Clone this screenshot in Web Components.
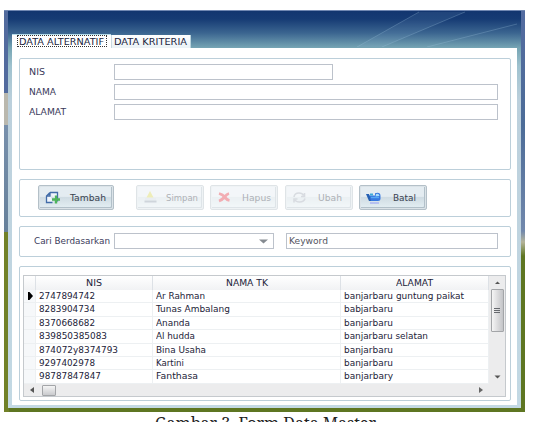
<!DOCTYPE html>
<html lang="id">
<head>
<meta charset="utf-8">
<title>Form Data Master</title>
<style>
    body {
        margin: 0;
        background: #fff;
        overflow: hidden;
        height: 422px;
        font-family: "DejaVu Sans", Verdana, sans-serif;
        font-size: 9px;
        color: #3a3a5a;
    }
</style>
</head>
<body>
<data-master></data-master>
<script>
// one line of text stretched to a given width
class FitText extends HTMLElement {
    constructor() {
        super();
        this.attachShadow({mode: "open"});
    }
    connectedCallback() {
        this.shadowRoot.innerHTML = `<style>
        :host {
            display: block;
            flex: none;
            white-space: nowrap;
            line-height: 12px;
            width: ${this.getAttribute('width')}px;
        }
        span {
            display: inline-block;
            transform-origin: 0 50%;
        }
        </style><span><slot></slot></span>`;
        const span = this.shadowRoot.querySelector('span');
        const real = span.getBoundingClientRect().width;
        if (real > 0) {
            span.style.transform = `scaleX(${this.getAttribute('width') / real})`;
        }
    }
}
customElements.define('fit-text', FitText);

class GroupPanel extends HTMLElement {
    constructor() {
        super();
        this.attachShadow({mode: "open"});
        this.shadowRoot.innerHTML = `<style>
        :host {
            display: block;
            flex: none;
            box-sizing: border-box;
            border: 1px solid #bccfda;
            border-radius: 2px;
            background: #fff;
        }
        </style><slot></slot>`;
    }
}
customElements.define('group-panel', GroupPanel);

class TextField extends HTMLElement {
    constructor() {
        super();
        this.attachShadow({mode: "open"});
    }
    connectedCallback() {
        const combo = this.hasAttribute('combo');
        this.shadowRoot.innerHTML = `<style>
        :host {
            display: flex;
            align-items: center;
            justify-content: ${combo ? 'flex-end' : 'flex-start'};
            flex: none;
            box-sizing: border-box;
            width: ${this.getAttribute('width')}px;
            height: 16px;
            border: 1px solid #bcc2cb;
            background: #fff;
            padding: 0 ${combo ? 5 : 2}px;
            color: #55555f;
        }
        </style><slot></slot>${combo ? '<svg width="9" height="5"><path d="M0 .5h9L4.5 4.5z" fill="#858b91"/></svg>' : ''}`;
    }
}
customElements.define('text-field', TextField);

const icons = {
    add: `<path d="M5 1.5h7.500v9M5 1.500L1.500 5v6.500h6M5 1.500V5H1.500" fill="#f0f6fc" stroke="#426ca8" stroke-width="1.300"/>
          <path d="M11 4.500v8M7 8.500h8" stroke="#4eb45b" stroke-width="2.400"/>`,
    save: `<path d="M7 0l3.500 6.500h-7z" fill="#d8d65a"/><path d="M1.500 9.500h12v2h-12z" fill="#8f9cac"/><path d="M2 8h11" stroke="#c5ccd5"/>`,
    remove: `<path d="M2 2.500q4 1 5.500 3.500Q10 3 12 2.500M2 10Q5 9 7.500 6q2.500 3 5 3.500" fill="none" stroke="#e23d4b" stroke-width="2.800"/>`,
    edit: `<path d="M2 6q.5-4 5-4 3.500 0 4.500 2.500M12.500 2v3.500H9M13 7.500q-1 3.500-5.500 3.500Q4 11 3 9M2 11.500V8h3.500" fill="none" stroke="#a3acb8" stroke-width="1.600"/>`,
    cancel: `<path d="M2 4.500h7V2.200q5.500-1.400 5.500 2.800v3q0 2-2.500 2H4z" fill="#3878df"/><path d="M0 3h3l2 7H3z" fill="#2560b3"/>
          <path d="M4 3.500h3" stroke="#3fa9d8" stroke-width="2"/><path d="M10 3q3-1 3.500 2l-4 .5z" fill="#a7ddfa"/><path d="M5 6.500h8" stroke="#55a8f5" stroke-width="1.400"/><path d="M4 12h9" stroke="#b3bdf2" stroke-width="1.800"/>`
};

class ToolButton extends HTMLElement {
    constructor() {
        super();
        this.attachShadow({mode: "open"});
    }
    connectedCallback() {
        this.shadowRoot.innerHTML = `<style>
        :host {
            display: flex;
            flex: none;
            align-items: center;
            justify-content: space-between;
            box-sizing: border-box;
            width: ${this.getAttribute('width')}px;
            height: 25px;
            padding: 0 ${this.getAttribute('end') || 7}px 0 6px;
            border: 1px solid #b4c0c8;
            border-radius: 2px;
            background: linear-gradient(#e4ecf1 0 45%, #d0dce3 50%, #e5f0f4);
            box-shadow: inset 1px 1px #dbe3e8, inset -1px -1px #dbe3e8, inset -2px -2px #b2c0c9;
            color: #39424f;
        }
        :host([disabled]) {
            opacity: .42;
        }
        svg {
            display: block;
        }
        </style>
        <svg width="16" height="14" viewBox="0 0 16 14">${icons[this.getAttribute('icon')]}</svg>
        <slot></slot>`;
    }
}
customElements.define('tool-button', ToolButton);

class TabBar extends HTMLElement {
    constructor() {
        super();
        this.attachShadow({mode: "open"});
        this.shadowRoot.innerHTML = `<style>
        :host {
            display: flex;
            align-items: flex-end;
            height: 37px;
            color: #20233c;
        }
        .tab {
            box-sizing: border-box;
            height: 13px;
            width: 80px;
            background: linear-gradient(#fff, #eaf2f6);
            border-right: 1px solid #b9d3dc;
            border-left: 1px solid #c9d9e0;
            padding: 1px 0 0 2px;
        }
        .active {
            width: 99px;
            height: 14px;
            background: #fff;
            border: 0;
            border-top: 1px solid #b5dcea;
            padding: 0 0 0 5px;
        }
        .focus {
            box-sizing: border-box;
            width: 90px;
            height: 12px;
            border: 1px dotted #333;
            padding-left: 1px;
        }
        </style>
        <div class="tab active"><div class="focus"><fit-text width="85">DATA ALTERNATIF</fit-text></div></div>
        <div class="tab"><fit-text width="73">DATA KRITERIA</fit-text></div>`;
    }
}
customElements.define('tab-bar', TabBar);

const rows = [
    ['2747894742', 56, 'Ar Rahman', 49, 'banjarbaru guntung paikat', 120],
    ['8283904734', 56, 'Tunas Ambalang', 74, 'babjarbaru', 49],
    ['8370668682', 56, 'Ananda', 34, 'banjarbaru', 49],
    ['839850385083', 68, 'Al hudda', 39, 'banjarbaru selatan', 84],
    ['874072y8374793', 79, 'Bina Usaha', 50, 'banjarbaru', 49],
    ['9297402978', 56, 'Kartini', 28, 'banjarbaru', 49],
    ['98787847847', 62, 'Fanthasa', 42, 'banjarbary', 49]
];

class DataGrid extends HTMLElement {
    constructor() {
        super();
        this.attachShadow({mode: "open"});
    }
    createRow(row, i) {
        return `<div class="row">
        <div class="mark">${i === 0 ? '<svg width="7" height="8"><path d="M1 0h1.500L6 4 2.500 8H1z" fill="#000"/></svg>' : ''}</div>
        <div><fit-text width="${row[1]}">${row[0]}</fit-text></div>
        <div><fit-text width="${row[3]}">${row[2]}</fit-text></div>
        <div><fit-text width="${row[5]}">${row[4]}</fit-text></div>
        </div>`;
    }
    connectedCallback() {
        this.shadowRoot.innerHTML = `<style>
        :host {
            display: grid;
            grid-template: 108px 12px / 465px 16px;
            box-sizing: border-box;
            width: 483px;
            height: 122px;
            border: 1px solid #c5c9cd;
            background: #ececed;
            color: #222238;
        }
        .table {
            background: #fff;
            overflow: hidden;
        }
        .head, .row {
            display: grid;
            grid-template-columns: 12px 117px 188px 148px;
        }
        .head {
            height: 14px;
            background: linear-gradient(#fff, #f1f2f4);
        }
        .head > div {
            display: flex;
            justify-content: center;
            padding-top: 1px;
            border-right: 1px solid #dde1e6;
        }
        .row {
            height: 13.400px;
        }
        .row > div {
            box-sizing: border-box;
            padding-left: 3px;
            border-right: 1px solid #edf0f2;
            border-bottom: 1px solid #edf0f2;
        }
        .row .mark {
            padding: 2px 0 0 3px;
            background: #f6f8fa;
        }
        .vbar {
            display: flex;
            flex-direction: column;
            align-items: center;
        }
        .vbar svg, .hbar svg {
            flex: none;
        }
        .thumb {
            box-sizing: border-box;
            border: 1px solid #a3a5a8;
            border-radius: 1px;
        }
        .vbar .thumb {
            display: grid;
            place-items: center;
            width: 13px;
            height: 43px;
            background: linear-gradient(90deg, #f5f5f5, #dcdcde 50%, #c3c4c7);
        }
        .hbar {
            grid-column: 1 / 3;
            display: flex;
            align-items: center;
            padding-left: 6px;
        }
        .hbar .thumb {
            width: 14px;
            height: 11px;
            margin: 0 auto 0 8px;
            background: linear-gradient(#f5f5f5, #c9cacd);
        }
        .vbar .down {
            margin: auto 0 5px;
        }
        .hbar .right {
            margin-right: 22px;
        }
        </style>
        <div class="table">
            <div class="head">
                <div></div>
                <div><fit-text width="16">NIS</fit-text></div>
                <div><fit-text width="42">NAMA TK</fit-text></div>
                <div><fit-text width="37">ALAMAT</fit-text></div>
            </div>
            ${rows.map(this.createRow).join('')}
        </div>
        <div class="vbar">
            <svg width="7" height="13"><path d="M1 8h5L3.500 5.500z" fill="#555"/></svg>
            <div class="thumb"><svg width="6" height="6"><path d="M0 .5h6M0 2.500h6M0 4.500h6" stroke="#66696e"/></svg></div>
            <svg class="down" width="7" height="4"><path d="M.5 .5h6L3.500 3.500z" fill="#555"/></svg>
        </div>
        <div class="hbar">
            <svg width="4" height="6"><path d="M4 0v6L0 3z" fill="#555"/></svg>
            <div class="thumb"></div>
            <svg class="right" width="4" height="6"><path d="M0 0v6l4-3z" fill="#666"/></svg>
        </div>`;
    }
}
customElements.define('data-grid', DataGrid);

class DataMaster extends HTMLElement {
    constructor() {
        super();
        this.attachShadow({mode: "open"});
    }
    connectedCallback() {
        this.shadowRoot.innerHTML = `<style>
        :host {
            display: block;
            padding: 10px 0 0 4px;
        }
        .frame {
            box-sizing: border-box;
            width: 521px;
            height: 402px;
            padding: 1px 4px 4px;
            background:
                linear-gradient(#7087b2, #7087b2) 0 0 / 100% 1px no-repeat,
                linear-gradient(#526b9e 0 83px, #bab8ae 83px 115px, #7890ac 115px, #66809a 222px, #718128 222px) 0 0 / 5px 100% no-repeat,
                linear-gradient(#536ba0 1px, #4c6c98 115px, #7188ac 221px, #b4b49a 232px, #5e7622 246px) 100% 0 / 5px 100% no-repeat,
                #5e7622;
        }
        .window {
            position: relative;
            height: 397px;
            box-sizing: border-box;
            padding: 0 4px 3px;
            background: linear-gradient(#12356f, #163b74 8px, #3b6590 22px, #76a5b4 37px, #9fc2cf 55px, #bcd0dc 90px, #c3d9e4);
        }
        .rays {
            position: absolute;
            right: 4px;
            top: 0;
        }
        .page {
            height: 357px;
            box-sizing: border-box;
            background: #fff;
            padding: 10px 6px 0 7px;
            display: flex;
            flex-direction: column;
            gap: 9px;
        }
        .form {
            height: 112px;
            padding: 5px 12px 0 9px;
        }
        .line {
            display: flex;
            align-items: center;
            height: 16px;
            margin-bottom: 4px;
        }
        .line .label {
            width: 85px;
        }
        .buttons {
            display: flex;
            height: 38px;
            padding: 5px 0 0 18px;
        }
        .search {
            display: flex;
            height: 31px;
            padding: 6px 0 0 14px;
        }
        .search > fit-text {
            margin: 2px 4px 0 0;
        }
        .table {
            height: 135px;
            padding: 8px 0 0 3px;
        }
        .caption {
            width: 221px;
            margin: 1px 0 0 151px;
            font: 16px "Noto Serif", "DejaVu Serif", serif;
            color: #222;
        }
        .caption fit-text {
            line-height: 20px;
        }
        </style>
        <div class="frame">
            <div class="window">
                <svg class="rays" width="170" height="36"><g stroke="#a0c4de" stroke-opacity=".28"><path d="M10 36L72 1M35 36L118 1M80 36l90-23"/></g><path d="M10 36L72 1h46L35 36z" fill="#9dc7df" fill-opacity=".1"/></svg>
                <tab-bar></tab-bar>
                <div class="page">
                    <group-panel class="form">
                        <div class="line"><div class="label"><fit-text width="16">NIS</fit-text></div><text-field width="219"></text-field></div>
                        <div class="line"><div class="label"><fit-text width="27">NAMA</fit-text></div><text-field width="384"></text-field></div>
                        <div class="line"><div class="label"><fit-text width="37">ALAMAT</fit-text></div><text-field width="384"></text-field></div>
                    </group-panel>
                    <group-panel class="buttons">
                        <tool-button icon="add" width="76" end="7"><fit-text width="36">Tambah</fit-text></tool-button>
                        <tool-button icon="save" width="68" end="5" disabled style="margin-left:22px"><fit-text width="32">Simpan</fit-text></tool-button>
                        <tool-button icon="remove" width="68" end="6" disabled style="margin-left:6px"><fit-text width="29">Hapus</fit-text></tool-button>
                        <tool-button icon="edit" width="68" end="10" disabled style="margin-left:7px"><fit-text width="24">Ubah</fit-text></tool-button>
                        <tool-button icon="cancel" width="68" end="10" style="margin-left:6px"><fit-text width="23">Batal</fit-text></tool-button>
                    </group-panel>
                    <group-panel class="search">
                        <fit-text width="76">Cari Berdasarkan</fit-text>
                        <text-field width="160" combo></text-field>
                        <text-field width="212" style="margin-left:12px"><fit-text width="39">Keyword</fit-text></text-field>
                    </group-panel>
                    <group-panel class="table"><data-grid></data-grid></group-panel>
                </div>
            </div>
        </div>
        <div class="caption"><fit-text width="221">Gambar 3. Form Data Master</fit-text></div>`;
    }
}
customElements.define('data-master', DataMaster);
</script>
</body>
</html>
